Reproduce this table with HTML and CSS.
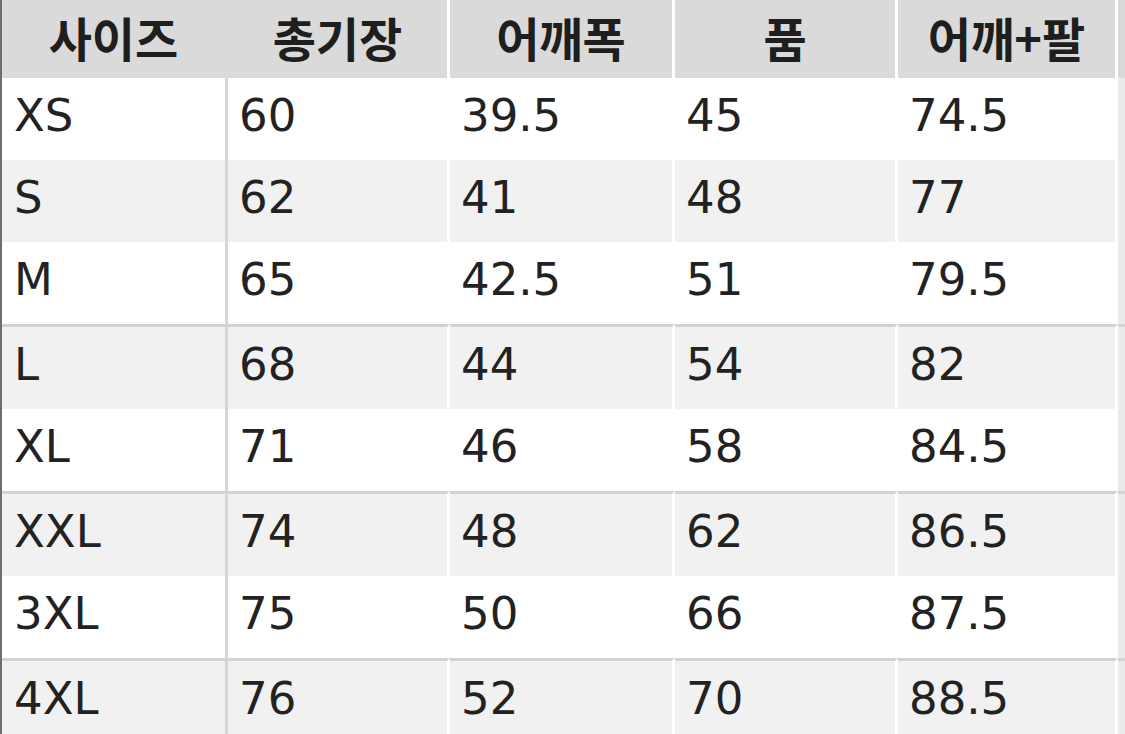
FILE: index.html
```html
<!DOCTYPE html>
<html lang="ko">
<head>
<meta charset="utf-8">
<title>사이즈표</title>
<link rel="stylesheet" href="styles.css">
</head>
<body>
<div class="sheet">
  <table class="size-table">
    <colgroup>
      <col class="c1"><col class="c2"><col class="c3"><col class="c4"><col class="c5"><col class="c6">
    </colgroup>
    <thead>
      <tr>
        <th class="first">사이즈</th>
        <th>총기장</th>
        <th>어깨폭</th>
        <th>품</th>
        <th>어깨+팔</th>
        <th class="edge"></th>
      </tr>
    </thead>
    <tbody>
      <tr class="w"><td class="first">XS</td><td>60</td><td>39.5</td><td>45</td><td>74.5</td><td class="edge"></td></tr>
      <tr class="g"><td class="first">S</td><td>62</td><td>41</td><td>48</td><td>77</td><td class="edge"></td></tr>
      <tr class="w"><td class="first">M</td><td>65</td><td>42.5</td><td>51</td><td>79.5</td><td class="edge"></td></tr>
      <tr class="g line"><td class="first">L</td><td>68</td><td>44</td><td>54</td><td>82</td><td class="edge"></td></tr>
      <tr class="w"><td class="first">XL</td><td>71</td><td>46</td><td>58</td><td>84.5</td><td class="edge"></td></tr>
      <tr class="g line"><td class="first">XXL</td><td>74</td><td>48</td><td>62</td><td>86.5</td><td class="edge"></td></tr>
      <tr class="w"><td class="first">3XL</td><td>75</td><td>50</td><td>66</td><td>87.5</td><td class="edge"></td></tr>
      <tr class="g line"><td class="first">4XL</td><td>76</td><td>52</td><td>70</td><td>88.5</td><td class="edge"></td></tr>
    </tbody>
  </table>
</div>
</body>
</html>
```
FILE: styles.css
```css
html, body {
  margin: 0;
  padding: 0;
  background: #ffffff;
}

.sheet {
  width: 1125px;
  height: 734px;
  overflow: hidden;
  border-left: 2px solid #6e6e6e;
  box-sizing: border-box;
}

.size-table {
  width: 1123px;
  table-layout: fixed;
  border-collapse: separate;
  border-spacing: 0;
}

.c1 { width: 226px; }
.c2 { width: 222px; }
.c3 { width: 225px; }
.c4 { width: 223px; }
.c5 { width: 220px; }
.c6 { width: 7px; }

.size-table th {
  height: 78px;
  padding: 0 0 6px 0;
  background: #dadada;
  color: #1e1e1e;
  font-family: "Noto Sans CJK KR", "Noto Sans", sans-serif;
  font-weight: 700;
  font-size: 47px;
  text-align: center;
  vertical-align: middle;
  border-right: 3px solid #ffffff;
  box-sizing: border-box;
  line-height: 1;
}

.size-table th.first {
  border-right-color: #dadada;
}

.size-table td {
  height: 82px;
  padding: 0 0 7px 11px;
  box-sizing: border-box;
  color: #222222;
  font-family: "DejaVu Sans", "Liberation Sans", sans-serif;
  font-size: 45px;
  text-align: left;
  vertical-align: middle;
  border-right: 3px solid #ffffff;
  white-space: nowrap;
}

.size-table td.first {
  padding-left: 12px;
  border-right: 3px solid #d6d6d6;
}

.size-table th.edge,
.size-table td.edge {
  border-right: 0;
  padding: 0;
}

.size-table td.edge {
  background: #ebebeb;
}

.w td {
  background: #ffffff;
}

.g td {
  background: #f1f1f1;
}

.line td {
  border-top: 3px solid #d3d3d3;
  height: 85px;
}
```
